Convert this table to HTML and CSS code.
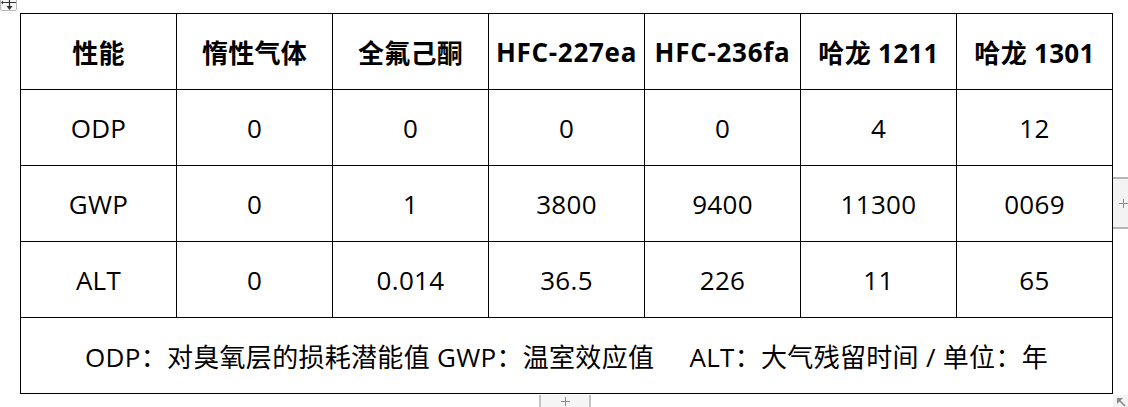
FILE: index.html
```html
<!DOCTYPE html>
<html lang="zh-CN">
<head>
<meta charset="utf-8">
<title>性能对比</title>
<link rel="stylesheet" href="styles.css">
</head>
<body>
<div class="page">
  <div class="move-handle">
    <svg width="17" height="18" viewBox="0 0 17 18">
      <g stroke="#333" stroke-width="1.2" fill="none">
        <line x1="8.5" y1="-4" x2="8.5" y2="9"/>
        <line x1="2" y1="2.5" x2="15" y2="2.5"/>
      </g>
      <polygon points="5.5,6 11.5,6 8.5,10" fill="#333"/>
      <polygon points="15,0.5 15,4.5 17,2.5" fill="#333"/>
      <polygon points="2,0.5 2,4.5 0,2.5" fill="#333"/>
    </svg>
  </div>
  <table class="grid">
    <thead>
      <tr>
        <th>性能</th>
        <th>惰性气体</th>
        <th>全氟己酮</th>
        <th class="latin">HFC-227ea</th>
        <th class="latin">HFC-236fa</th>
        <th>哈龙 1211</th>
        <th>哈龙 1301</th>
      </tr>
    </thead>
    <tbody>
      <tr><td>ODP</td><td>0</td><td>0</td><td>0</td><td>0</td><td>4</td><td>12</td></tr>
      <tr><td>GWP</td><td>0</td><td>1</td><td>3800</td><td>9400</td><td>11300</td><td>0069</td></tr>
      <tr><td>ALT</td><td>0</td><td>0.014</td><td>36.5</td><td>226</td><td>11</td><td>65</td></tr>
      <tr><td class="note" colspan="7">ODP：对臭氧层的损耗潜能值 GWP：温室效应值&nbsp;&nbsp;&nbsp;&nbsp; ALT：大气残留时间 / 单位：年</td></tr>
    </tbody>
  </table>
  <div class="add-row-side"><span class="plus"></span></div>
  <div class="add-row-bottom"><span class="plus"></span></div>
  <div class="resize-corner">
    <svg width="12" height="12" viewBox="0 0 12 12">
      <path d="M2 2 L9 9" stroke="#888" stroke-width="1.6"/>
      <polygon points="1,1 7,1 1,7" fill="#888"/>
    </svg>
  </div>
</div>
</body>
</html>
```

FILE: styles.css
```css
html, body {
  margin: 0;
  padding: 0;
  background: #ffffff;
}

.page {
  position: relative;
  width: 1128px;
  height: 407px;
  overflow: hidden;
  padding: 13px 0 0 20px;
  box-sizing: border-box;
}

.grid {
  border-collapse: collapse;
  table-layout: fixed;
  width: 1093px;
  font-family: "Open Sans", "Noto Sans CJK SC", sans-serif;
  font-size: 26px;
  letter-spacing: 0.3px;
  color: #000;
}

.grid th,
.grid td {
  border: 1px solid #000;
  height: 76px;
  padding: 0;
  text-align: center;
  vertical-align: middle;
  white-space: nowrap;
  box-sizing: border-box;
}

.grid th {
  font-weight: 700;
}

.grid th.latin {
  letter-spacing: 0.7px;
}

.grid td {
  font-weight: 400;
}

.move-handle {
  position: absolute;
  left: 0;
  top: -6px;
  width: 17px;
  height: 17px;
  border: 1px solid #b9b9b9;
  border-radius: 2px;
  background: #fafafa;
  box-sizing: border-box;
  overflow: hidden;
}

.move-handle svg {
  display: block;
  margin-top: 5px;
}

.add-row-side {
  position: absolute;
  left: 1113px;
  top: 177px;
  width: 20px;
  height: 52px;
  background: #f3f3f3;
  border-top: 2px solid #b5b5b5;
  border-bottom: 2px solid #b5b5b5;
  box-sizing: border-box;
}

.add-row-side .plus {
  position: absolute;
  left: 6px;
  top: 20px;
}

.add-row-bottom {
  position: absolute;
  left: 539px;
  top: 395px;
  width: 52px;
  height: 20px;
  background: #f5f5f5;
  border-left: 2px solid #c4c4c4;
  border-right: 2px solid #c4c4c4;
  box-sizing: border-box;
}

.add-row-bottom .plus {
  position: absolute;
  left: 20px;
  top: 2px;
}

.plus {
  width: 9px;
  height: 9px;
  display: block;
}

.plus::before,
.plus::after {
  content: "";
  position: absolute;
  background: #8a8a8a;
}

.plus::before {
  left: 0;
  top: 4px;
  width: 9px;
  height: 1px;
}

.plus::after {
  left: 4px;
  top: 0;
  width: 1px;
  height: 9px;
}

.resize-corner {
  position: absolute;
  left: 1113px;
  top: 395px;
  width: 15px;
  height: 12px;
  background: #f3f3f3;
  padding: 2px 0 0 3px;
  box-sizing: border-box;
}

.resize-corner svg {
  display: block;
}
```
